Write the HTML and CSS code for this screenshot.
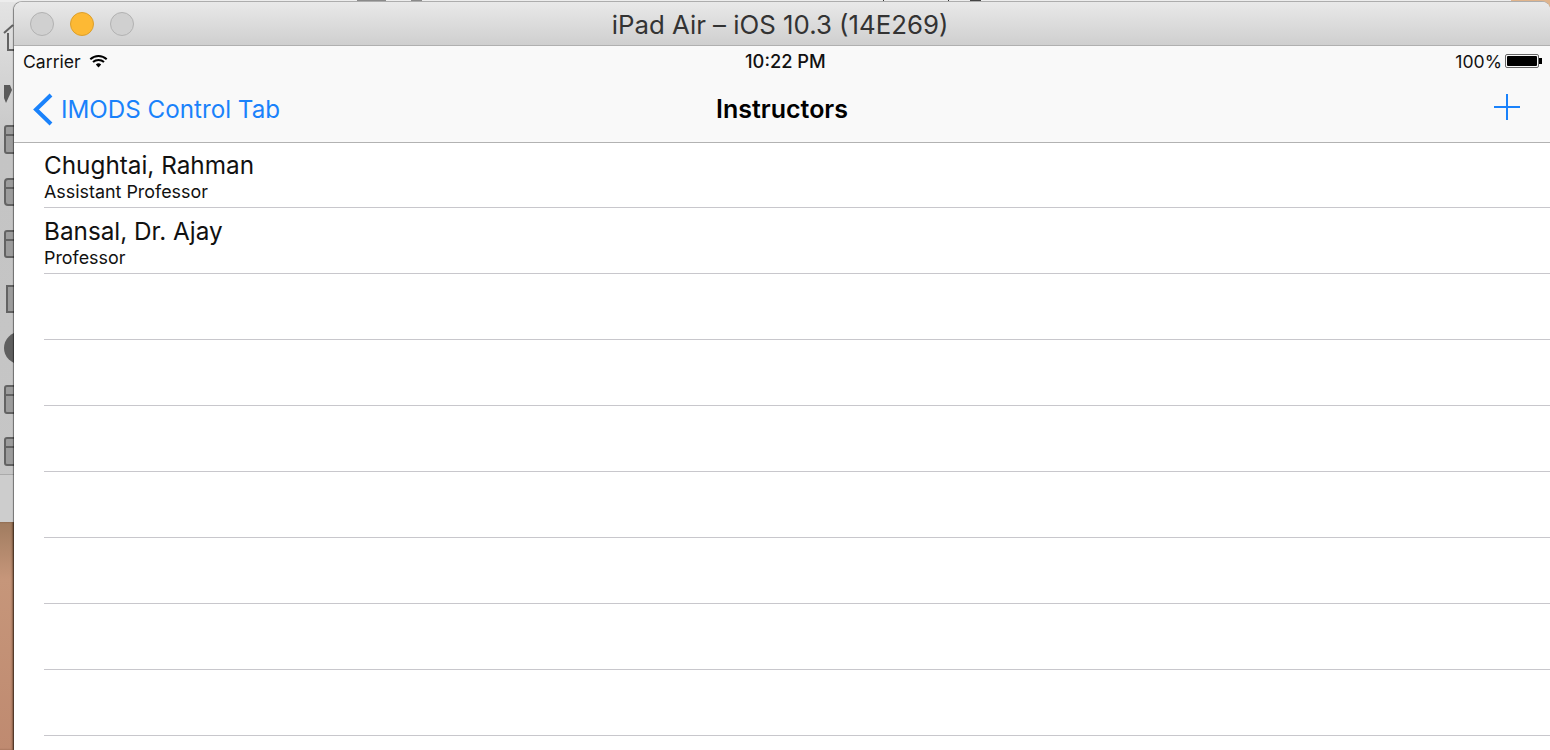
FILE: index.html
```html
<!DOCTYPE html>
<html lang="en">

<head>
    <meta charset="UTF-8">
    <title>iPad Air - iOS 10.3 (14E269)</title>
    <link rel="stylesheet" href="styles.css">
</head>

<body>
    <!-- bits of the desktop showing above the simulator window -->
    <div class="top-strip">
        <span class="strip-mark mark-a"></span>
        <span class="strip-mark mark-b"></span>
        <span class="strip-mark mark-c"></span>
        <span class="strip-mark mark-d"></span>
        <span class="strip-mark mark-e"></span>
        <span class="strip-wallpaper"></span>
    </div>

    <!-- desktop icons peeking out left of the simulator window -->
    <div class="desktop">
        <div class="dock">
            <svg class="dock-icons" width="14" height="475" viewBox="0 0 14 475">
                <path d="M4 33L13 25M8 33V50H15" fill="none" stroke="#636363" stroke-width="2" />
                <path d="M4 85H10L12 90L6 103L4 98Z" fill="#5a5a5a" />
                <g fill="#9c9c9c" stroke="#636363" stroke-width="2">
                    <rect x="5" y="126" width="12" height="27" rx="2" />
                    <rect x="5" y="179" width="12" height="26" rx="3" />
                    <rect x="5" y="231" width="12" height="26" rx="2" />
                    <rect x="7" y="286" width="10" height="26" />
                    <rect x="5" y="386" width="12" height="27" rx="2" />
                    <rect x="5" y="438" width="12" height="27" rx="2" />
                    <path d="M5 135H15M5 188H15M5 240H15M5 395H15M5 447H15" fill="none" />
                </g>
                <circle cx="20" cy="348" r="16" fill="#5f5f5f" />
            </svg>
        </div>
        <div class="wallpaper"></div>
    </div>

    <div class="window">
        <header class="titlebar">
            <div class="lights">
                <span class="light"></span>
                <span class="light light-min"></span>
                <span class="light"></span>
            </div>
            <div class="window-title">iPad Air – iOS 10.3 (14E269)</div>
        </header>

        <div class="nav-area">
            <div class="statusbar">
                <div class="status-left">
                    <span>Carrier</span>
                    <svg width="19" height="14" viewBox="0 0 19 14">
                        <path d="M9.5 13.5L6.8 10.4A4.2 4.2 0 0 1 12.2 10.4Z" fill="#000" />
                        <path d="M1.3 5.2A11.8 11.8 0 0 1 17.7 5.2M4 8.1A8 8 0 0 1 15 8.1" fill="none" stroke="#000" stroke-width="2" />
                    </svg>
                </div>
                <div class="status-time">10:22 PM</div>
                <div class="status-right">
                    <span>100%</span>
                    <span class="battery"><span class="battery-fill"></span></span>
                    <span class="battery-tip"></span>
                </div>
            </div>
            <nav class="navbar">
                <a class="back">
                    <svg width="21" height="33" viewBox="0 0 21 33">
                        <path d="M19 2L4 16.5L19 31" fill="none" stroke="#1a82fb" stroke-width="4" />
                    </svg>
                    <span>IMODS Control Tab</span>
                </a>
                <h1 class="nav-title">Instructors</h1>
                <svg class="add" width="26" height="26" viewBox="0 0 26 26">
                    <path d="M13 0V26M0 13H26" stroke="#1a82fb" stroke-width="2" />
                </svg>
            </nav>
        </div>

        <ul class="list">
            <li class="row">
                <div class="row-name">Chughtai, Rahman</div>
                <div class="row-role">Assistant Professor</div>
            </li>
            <li class="row">
                <div class="row-name">Bansal, Dr. Ajay</div>
                <div class="row-role">Professor</div>
            </li>
            <li class="row"></li>
            <li class="row"></li>
            <li class="row"></li>
            <li class="row"></li>
            <li class="row"></li>
            <li class="row"></li>
            <li class="row"></li>
        </ul>
    </div>
</body>

</html>
```

FILE: styles.css
```css
html,
body {
    margin: 0;
    padding: 0;
    height: 100%;
    overflow: hidden;
}

body {
    display: flex;
    position: relative;
    font-family: Inter, "Liberation Sans", sans-serif;
    background-color: #e6e6e6;
    color: #000000;
    padding-top: 2px;
    box-sizing: border-box;
}

.top-strip {
    position: absolute;
    left: 0;
    right: 0;
    top: 0;
    height: 2px;
    background-color: #ededed;
    border-bottom: 0;
}

.strip-mark {
    position: absolute;
    top: 0;
    height: 2px;
    background-color: #8a8a8a;
}

.mark-a {
    left: 357px;
    width: 29px;
}

.mark-b {
    left: 411px;
    width: 11px;
}

.mark-c {
    left: 883px;
    width: 1px;
    background-color: #333333;
}

.mark-d {
    left: 948px;
    width: 1px;
    background-color: #333333;
}

.mark-e {
    left: 970px;
    width: 11px;
    background-color: #444444;
}

.strip-wallpaper {
    position: absolute;
    right: 0;
    top: 0;
    width: 39px;
    height: 10px;
    background-color: #e0b48c;
}

.desktop {
    width: 14px;
    flex: none;
    display: flex;
    flex-direction: column;
    margin-top: -2px;
}

.dock {
    height: 522px;
    flex: none;
    background: linear-gradient(to bottom, #e4e4e4, #c4c4c4 30%, #c6c6c6);
    box-shadow: inset 0 -47px 0 #cdcdcd, inset 0 -48px 0 #aaaaaa;
}

.dock-icons {
    display: block;
}

.wallpaper {
    flex: 1;
    background: linear-gradient(to bottom, #a07c60, #c6967a 25%, #bf8a70);
    box-shadow: inset -2px 0 2px rgba(70, 40, 20, 0.45);
}

.window {
    flex: 1;
    min-width: 0;
    display: flex;
    flex-direction: column;
    position: relative;
    background-color: #ffffff;
    border-radius: 8px 8px 0 0;
    overflow: hidden;
    box-shadow: -1px 0 1px rgba(0, 0, 0, 0.45), 0 -1px 0 #b5b5b5;
}

.titlebar {
    position: relative;
    height: 43px;
    flex: none;
    background: linear-gradient(to bottom, #e9e9e9, #cfcfcf);
    border-bottom: 1px solid #b0b0b0;
    display: flex;
    align-items: center;
    justify-content: center;
}

.lights {
    position: absolute;
    left: 16px;
    top: 10px;
    display: flex;
    gap: 16px;
}

.light {
    width: 22px;
    height: 22px;
    border-radius: 50%;
    background-color: #d0d0d0;
    border: 1px solid #b2b2b2;
}

.light-min {
    background-color: #fdb934;
    border-color: #dc9f2c;
}

.window-title {
    font-size: 25.8px;
    color: #333333;
    margin-right: 4px;
    margin-top: 2px;
}

.nav-area {
    flex: none;
    background-color: #f9f9f9;
    border-bottom: 1px solid #b2b2b2;
}

.statusbar {
    height: 32px;
    display: flex;
    align-items: center;
    justify-content: space-between;
    position: relative;
    box-sizing: border-box;
    font-size: 17.6px;
    padding: 0 8px 2px 9px;
    color: #111111;
}

.status-left,
.status-right {
    display: flex;
    align-items: center;
}

.status-left {
    gap: 8px;
}

.status-time {
    position: absolute;
    left: 731px;
    font-size: 18.3px;
    font-weight: 500;
}

.status-right {
    gap: 3px;
}

.battery {
    width: 34px;
    height: 14px;
    padding: 1px;
    box-sizing: border-box;
    border: 1px solid #666666;
    border-radius: 2px;
    display: flex;
}

.battery-fill {
    flex: 1;
    background-color: #000000;
    border-radius: 1px;
}

.battery-tip {
    width: 3px;
    height: 6px;
    margin-left: -3px;
    background-color: #000000;
}

.navbar {
    height: 64px;
    display: flex;
    align-items: center;
    justify-content: space-between;
    position: relative;
    box-sizing: border-box;
    padding: 0 30px 2px 18px;
}

.back {
    display: flex;
    align-items: center;
    gap: 8px;
    font-size: 24.2px;
    color: #1a82fb;
}

.nav-title {
    position: absolute;
    left: 702px;
    margin: 0;
    font-size: 25px;
    font-weight: 600;
}

.add {
    margin-bottom: 4px;
}

.list {
    list-style: none;
    margin: -1px 0 0;
    padding: 0;
}

.row {
    margin-left: 30px;
    border-bottom: 1px solid #c8c7cc;
    padding-top: 9px;
    height: 56px;
}

.row-name {
    font-size: 24.3px;
    line-height: 29px;
    color: #111111;
}

.row-role {
    font-size: 17.9px;
    line-height: 24px;
    color: #111111;
}
```
